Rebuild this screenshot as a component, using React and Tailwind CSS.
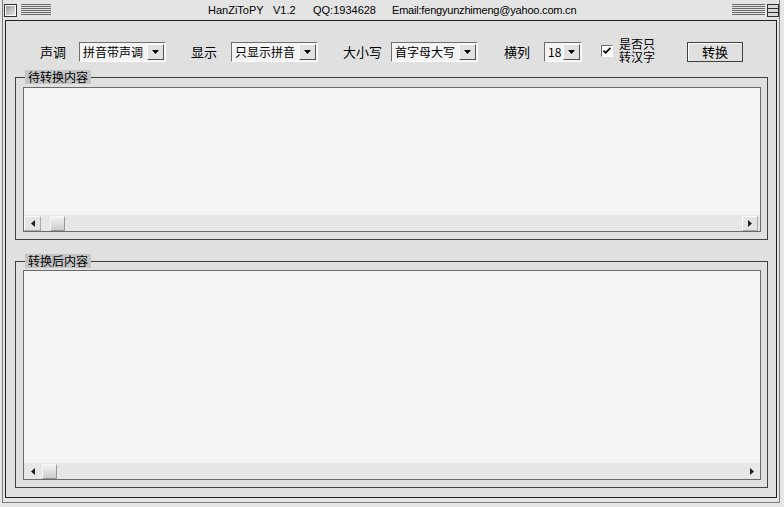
import React from "react";

const cjk = "font-['Noto_Sans_CJK_SC','Liberation_Sans',sans-serif]";

const DownTri = () => (
  <svg width="7" height="4" viewBox="0 0 7 4">
    <path d="M0 0h7L3.5 4z" fill="#000" />
  </svg>
);

const Select = ({ value, width }) => (
  <div
    className={`${width} h-[20px] flex items-center border border-t-[#6e6e6e] border-l-[#6e6e6e] border-b-white border-r-white bg-[#f4f4f4]`}
  >
    <span className={`pl-[3px] text-[12px] leading-[14px] text-black whitespace-nowrap ${cjk}`}>{value}</span>
    <div className="ml-auto mr-[1px] w-[17px] h-[16px] flex items-center justify-center bg-[#e2e2e2] border border-t-white border-l-white border-b-[#505050] border-r-[#505050]">
      <DownTri />
    </div>
  </div>
);

const Arrow = ({ dir }) => (
  <svg width="4" height="7" viewBox="0 0 4 7">
    {dir === "left" ? <path d="M4 0v7L0 3.5z" fill="#202020" /> : <path d="M0 0v7l4-3.5z" fill="#202020" />}
  </svg>
);

const Thumb = () => (
  <div className="w-[15px] h-[15px] border border-t-[#f8f8f8] border-l-[#f8f8f8] border-b-[#9a9a9a] border-r-[#9a9a9a] bg-gradient-to-b from-[#f2f2f2] to-[#cdcdcd]" />
);

const Group = ({ title, height, boxed, className }) => (
  <fieldset className={`ml-[9px] w-[753px] border border-[#404040] pl-[7px] pr-[6px] pb-[7px] ${className}`}>
    <legend className={`ml-[2px] px-[3px] h-[14px] bg-[#c4c4c4] text-[12px] leading-[14px] text-black ${cjk}`}>
      {title}
    </legend>
    <div className={`w-[738px] ${height} border border-[#6a6a6a] bg-[#f5f5f5] flex flex-col`}>
      <div className="flex-1" />
      <div className="h-[17px] bg-[#e7e7e7] border-t border-[#efefef] flex items-center">
        {boxed ? (
          <>
            <div className="w-[17px] h-[15px] flex items-center justify-center border border-t-white border-l-white border-b-[#a8a8a8] border-r-[#a8a8a8] bg-[#e4e4e4]">
              <Arrow dir="left" />
            </div>
            <div className="ml-[9px]">
              <Thumb />
            </div>
            <div className="ml-auto mr-[2px] w-[16px] h-[15px] flex items-center justify-center border border-t-white border-l-white border-b-[#a8a8a8] border-r-[#a8a8a8] bg-[#e4e4e4]">
              <Arrow dir="right" />
            </div>
          </>
        ) : (
          <>
            <div className="w-[17px] h-[15px] flex items-center justify-center">
              <Arrow dir="left" />
            </div>
            <div className="ml-[1px]">
              <Thumb />
            </div>
            <div className="ml-auto w-[17px] h-[15px] flex items-center justify-center">
              <Arrow dir="right" />
            </div>
          </>
        )}
      </div>
    </div>
  </fieldset>
);

export default function App() {
  return (
    <div className="w-[784px] h-[507px] bg-[#e6e6e6] overflow-hidden font-['Liberation_Sans',sans-serif]">
      <div className="ml-[2px] w-[778px] h-[503px] border-x border-b border-[#7a7a7a] flex flex-col">
        {/* Title bar */}
        <div className="h-[20px] flex items-start pt-[4px] bg-[#e4e4e4]">
          <div className="ml-[1px] w-[13px] h-[13px] border border-[#303030] p-[1px] bg-white">
            <div className="w-full h-full bg-gradient-to-br from-[#9a9a9a] to-[#e8e8e8]" />
          </div>
          <svg className="ml-[4px]" width="30" height="12" viewBox="0 0 30 12">
            {[0, 2, 4, 6, 8, 10].map((y) => (
              <rect key={y} x="0" y={y} width="30" height="1" fill="#6a6a6a" />
            ))}
          </svg>
          <div className="ml-[157px] flex text-[11px] leading-[13px] text-black whitespace-nowrap">
            <span className="w-[65px]">HanZiToPY</span>
            <span className="w-[40px]">V1.2</span>
            <span className="w-[79px]">QQ:1934628</span>
            <span className="tracking-[-0.2px]">Email:fengyunzhimeng@yahoo.com.cn</span>
          </div>
          <svg className="ml-auto" width="33" height="12" viewBox="0 0 33 12">
            {[0, 2, 4, 6, 8, 10].map((y) => (
              <rect key={y} x="0" y={y} width="33" height="1" fill="#6a6a6a" />
            ))}
          </svg>
          <div className="ml-[2px] w-[12px] h-[13px] border border-[#303030] bg-[#d8d8d8] flex flex-col justify-evenly">
            <div className="h-[1px] bg-[#303030]" />
            <div className="h-[1px] bg-[#303030]" />
          </div>
        </div>

        {/* Body */}
        <div className="ml-[2px] w-[772px] h-[478px] border border-[#202020] bg-[#e0e0e0]">
          <div className={`mt-[21px] h-[20px] flex items-center text-[13px] text-black ${cjk}`}>
            <span className="ml-[34px] w-[26px] leading-[16px]">声调</span>
            <div className="ml-[13px]">
              <Select value="拼音带声调" width="w-[87px]" />
            </div>
            <span className="ml-[25px] w-[26px] leading-[16px]">显示</span>
            <div className="ml-[14px]">
              <Select value="只显示拼音" width="w-[87px]" />
            </div>
            <span className="ml-[25px] w-[39px] leading-[16px]">大小写</span>
            <div className="ml-[9px]">
              <Select value="首字母大写" width="w-[87px]" />
            </div>
            <span className="ml-[26px] w-[26px] leading-[16px]">横列</span>
            <div className="ml-[14px]">
              <Select value="18" width="w-[38px]" />
            </div>
            <div className="ml-[19px] -mt-[3px] w-[12px] h-[12px] border border-t-[#707070] border-l-[#707070] border-b-white border-r-white bg-white flex items-center justify-center">
              <svg width="8" height="7" viewBox="0 0 8 7">
                <path d="M0.5 3.5l2.2 2.3L7.5 0.8" stroke="#000" strokeWidth="1.8" fill="none" />
              </svg>
            </div>
            <div className="ml-[6px] -mt-[4px] w-[38px] text-[12px] leading-[13px]">
              是否只
              <br />
              转汉字
            </div>
            <button className="ml-[30px] w-[56px] h-[20px] border border-[#404040] bg-[#e0e0e0] shadow-[inset_1px_1px_0_#ffffff] text-[13px] leading-[16px] text-black">
              转换
            </button>
          </div>

          <Group title="待转换内容" height="h-[145px]" boxed className="mt-[8px] pt-[3px]" />
          <Group title="转换后内容" height="h-[210px]" className="mt-[14px] pt-[2px]" />
        </div>
      </div>
    </div>
  );
}
